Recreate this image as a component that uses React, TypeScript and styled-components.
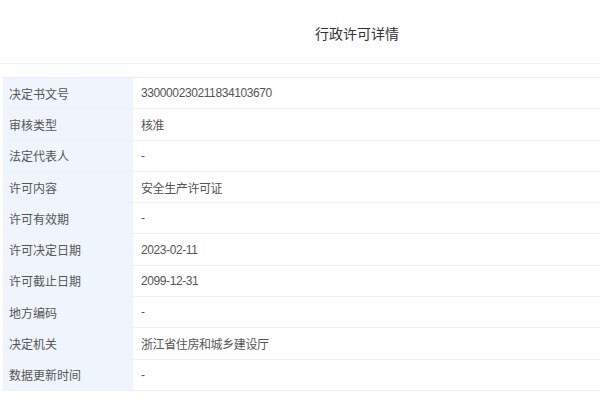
import React from "react";
import styled, { createGlobalStyle } from "styled-components";

const GlobalStyle = createGlobalStyle`
  body {
    margin: 0;
    background: #ffffff;
    font-family: "Liberation Sans", "Noto Sans CJK SC", sans-serif;
  }
`;

const Page = styled.div`
  width: 600px;
  height: 399px;
  overflow: hidden;
`;

const Header = styled.div`
  height: 64px;
  border-bottom: 1px solid #f2f2f4;
  display: flex;
  align-items: center;
  padding-left: 315px;
  padding-top: 2px;
  box-sizing: border-box;
  font-size: 14px;
  color: #333333;
`;

const Table = styled.div`
  margin: 13px 0 0 3px;
  border-top: 1px solid #ececf7;
`;

const Row = styled.div`
  display: grid;
  grid-template-columns: 130px 1fr;
  height: 31.3px;
  border-bottom: 1px solid #f1f1f4;
  box-sizing: border-box;
  font-size: 12px;
  color: #555555;
`;

const Label = styled.div`
  background: #eef5fc;
  display: flex;
  align-items: center;
  padding-left: 6px;
`;

const Value = styled.div`
  display: flex;
  align-items: center;
  padding-left: 8px;
  letter-spacing: -0.4px;
`;

const rows: [string, string][] = [
  ["决定书文号", "330000230211834103670"],
  ["审核类型", "核准"],
  ["法定代表人", "-"],
  ["许可内容", "安全生产许可证"],
  ["许可有效期", "-"],
  ["许可决定日期", "2023-02-11"],
  ["许可截止日期", "2099-12-31"],
  ["地方编码", "-"],
  ["决定机关", "浙江省住房和城乡建设厅"],
  ["数据更新时间", "-"],
];

export default function App() {
  return (
    <Page>
      <GlobalStyle />
      <Header>行政许可详情</Header>
      <Table>
        {rows.map(([label, value]) => (
          <Row key={label}>
            <Label>{label}</Label>
            <Value>{value}</Value>
          </Row>
        ))}
      </Table>
    </Page>
  );
}
